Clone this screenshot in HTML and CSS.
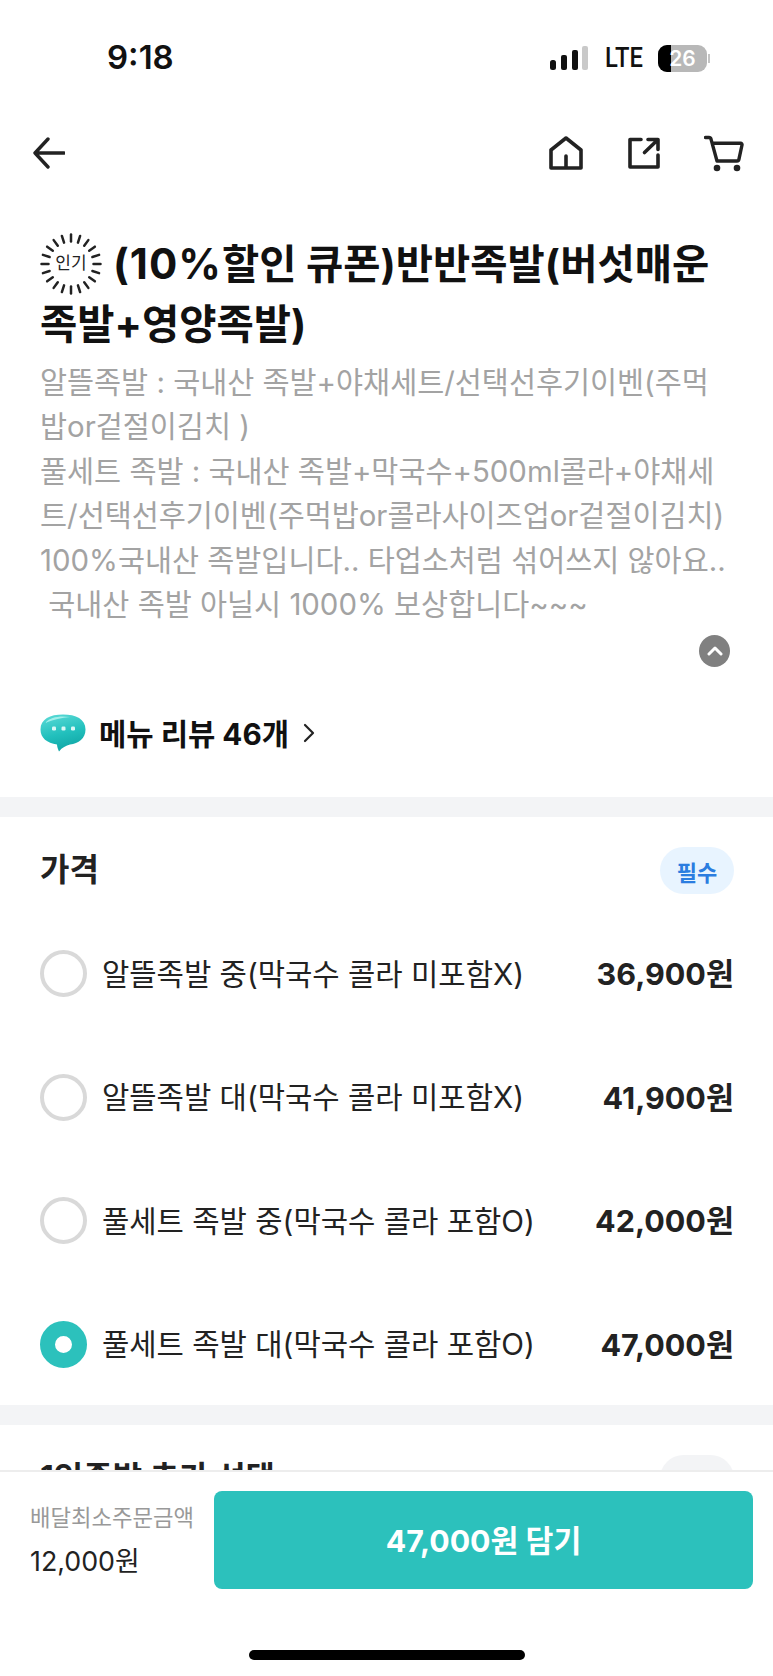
FILE: index.html
```html
<!DOCTYPE html>
<html lang="ko">
<head>
<meta charset="utf-8">
<title>반반족발</title>
<link rel="stylesheet" href="styles.css">
</head>
<body>
<div class="screen">
  <div class="status">
    <span class="time">9:18</span>
    <div class="status-right">
      <svg class="signal" viewBox="0 0 38 24" width="38" height="24"><rect x="0" y="14" width="6" height="10" rx="2.500" fill="#111"/><rect x="11" y="9" width="6" height="15" rx="2" fill="#111"/><rect x="22" y="4" width="6" height="20" rx="2" fill="#111"/><rect x="32" y="0" width="6" height="24" rx="2" fill="#c9c9c9"/></svg>
      <span class="lte">LTE</span>
      <div class="battery"><div class="battery-fill"></div><span class="battery-num">26</span></div>
      <div class="battery-cap"></div>
    </div>
  </div>
  <div class="nav">
    <svg class="ic-back" viewBox="0 0 32 32" width="32" height="32"><path d="M15 2 2 16l13 14M2 16h29" fill="none" stroke="#222" stroke-width="3.400" stroke-linecap="round" stroke-linejoin="round"/></svg>
    <div class="nav-right">
      <svg class="ic-home" viewBox="0 0 34 34" width="34" height="34"><path d="M2 32V14L17 2l15 12v18ZM17 32V20" fill="none" stroke="#222" stroke-width="3.600" stroke-linejoin="round" stroke-linecap="round"/></svg>
      <svg class="ic-share" viewBox="0 0 32 32" width="32" height="32"><path d="M13 2.500H2V30h28V18" fill="none" stroke="#222" stroke-width="3.600" stroke-linejoin="round" stroke-linecap="round"/><path d="M20 2.500h10v10M29 3.500 16.500 15.500" fill="none" stroke="#222" stroke-width="3.600" stroke-linecap="round" stroke-linejoin="round"/></svg>
      <svg class="ic-cart" viewBox="0 0 40 37" width="40" height="37"><path d="M1.500 2.500H5c1 0 1.700.6 2 1.600L13 26H33c1 0 1.700-.6 1.900-1.600L38 10c.2-1-.4-1.800-1.400-1.800H8.500" fill="none" stroke="#222" stroke-width="3.400" stroke-linecap="round" stroke-linejoin="round"/><circle cx="13" cy="33" r="3.300" fill="#222"/><circle cx="33" cy="33" r="3.300" fill="#222"/></svg>
    </div>
  </div>
  <section class="info">
    <h1 class="title">
      <span class="hot"><svg viewBox="0 0 62 62" width="62" height="62"><g stroke="#222" stroke-width="2.500" stroke-linecap="round"><path d="M31 1.500v7"/><path d="M31 1.500v7" transform="rotate(18 31 31)"/><path d="M31 1.500v7" transform="rotate(36 31 31)"/><path d="M31 1.500v7" transform="rotate(54 31 31)"/><path d="M31 1.500v7" transform="rotate(72 31 31)"/><path d="M31 1.500v7" transform="rotate(90 31 31)"/><path d="M31 1.500v7" transform="rotate(108 31 31)"/><path d="M31 1.500v7" transform="rotate(126 31 31)"/><path d="M31 1.500v7" transform="rotate(144 31 31)"/><path d="M31 1.500v7" transform="rotate(162 31 31)"/><path d="M31 1.500v7" transform="rotate(180 31 31)"/><path d="M31 1.500v7" transform="rotate(198 31 31)"/><path d="M31 1.500v7" transform="rotate(216 31 31)"/><path d="M31 1.500v7" transform="rotate(234 31 31)"/><path d="M31 1.500v7" transform="rotate(252 31 31)"/><path d="M31 1.500v7" transform="rotate(270 31 31)"/><path d="M31 1.500v7" transform="rotate(288 31 31)"/><path d="M31 1.500v7" transform="rotate(306 31 31)"/><path d="M31 1.500v7" transform="rotate(324 31 31)"/><path d="M31 1.500v7" transform="rotate(342 31 31)"/></g></svg><span class="hot-text">인기</span></span><span class="title-num">(10%</span>할인 큐폰)반반족발(버섯매운<br>족발+영양족발)
    </h1>
    <p class="desc">알뜰족발 : 국내산 족발+야채세트/선택선후기이벤(주먹<br>밥or겉절이김치 )<br>풀세트 족발 : 국내산 족발+막국수+500ml콜라+야채세<br>트/선택선후기이벤(주먹밥or콜라사이즈업or겉절이김치)<br>100%국내산 족발입니다.. 타업소처럼 섞어쓰지 않아요..<br>&nbsp;국내산 족발 아닐시 1000% 보상합니다~~~</p>
    <div class="more-row">
      <span class="more"><svg viewBox="0 0 16 10" width="16" height="10"><path d="M2 8l6-6 6 6" fill="none" stroke="#fff" stroke-width="3" stroke-linecap="round" stroke-linejoin="round"/></svg></span>
    </div>
    <div class="review">
      <svg class="bubble" viewBox="0 0 46 38" width="46" height="38"><defs><linearGradient id="bub" x1="0" y1="0" x2="0.3" y2="1"><stop offset="0" stop-color="#5fdcd8"/><stop offset="0.6" stop-color="#22c0bd"/><stop offset="1" stop-color="#12a9a8"/></linearGradient></defs><path d="M23 .5C36 .5 45.500 5 45.500 15.500c0 9-7 14-15.500 15-4 1-8 3-11 7-1-2-2-5-2-7C7 29 .5 24 .5 15.500.5 5 10 .5 23 .5Z" fill="url(#bub)"/><path d="M5 9C10 3 20 1.500 30 3 22 4 13 5.500 5 9Z" fill="#a2efea"/><rect x="12" y="12.500" width="4" height="4" rx="1.200" fill="#d9f7f5"/><rect x="21.500" y="12.500" width="4" height="4" rx="1.200" fill="#d9f7f5"/><rect x="31" y="12.500" width="4" height="4" rx="1.200" fill="#d9f7f5"/></svg>
      <span class="review-text">메뉴 리뷰 46개</span>
      <svg viewBox="0 0 12 20" width="12" height="20"><path d="M2 2l8 8-8 8" fill="none" stroke="#222" stroke-width="2.200" stroke-linecap="round" stroke-linejoin="round"/></svg>
    </div>
  </section>
  <div class="band"></div>
  <section class="options">
    <div class="opt-head"><h2 class="opt-title">가격</h2><span class="pill">필수</span></div>
    <div class="opt"><span class="radio"></span><span class="opt-label">알뜰족발 중(막국수 콜라 미포함X)</span><span class="opt-price">36,900원</span></div>
    <div class="opt"><span class="radio"></span><span class="opt-label">알뜰족발 대(막국수 콜라 미포함X)</span><span class="opt-price">41,900원</span></div>
    <div class="opt"><span class="radio"></span><span class="opt-label">풀세트 족발 중(막국수 콜라 포함O)</span><span class="opt-price">42,000원</span></div>
    <div class="opt"><span class="radio radio-on"></span><span class="opt-label">풀세트 족발 대(막국수 콜라 포함O)</span><span class="opt-price">47,000원</span></div>
  </section>
  <div class="band"></div>
  <section class="options next">
    <div class="opt-head"><h2 class="opt-title next-title">1인족발 추가 선택</h2><span class="pill pill-grey">선택</span></div>
  </section>
  <div class="bottom">
    <div class="bar">
      <div class="min"><span class="min-label">배달최소주문금액</span><span class="min-price">12,000원</span></div>
      <div class="cta">47,000원 담기</div>
    </div>
    <div class="home-ind"></div>
  </div>
</div>
</body>
</html>
```
FILE: styles.css
```css
* { box-sizing: border-box; }
html, body { margin: 0; padding: 0; background: #fff; }
body { font-family: "Inter", "Noto Sans CJK KR", sans-serif; color: #222; }
.screen { position: relative; width: 773px; height: 1676px; overflow: hidden; background: #fff; }
.status { display: flex; justify-content: space-between; align-items: center; height: 116px; padding: 0 63px 0 107px; }
.time { font-size: 33px; font-weight: 600; color: #111; line-height: 1; padding-bottom: 2px; }
.status-right { display: flex; align-items: center; }
.signal { margin-right: 17px; }
.lte { font-family: "Roboto", sans-serif; font-size: 27px; font-weight: 500; color: #111; margin-right: 15px; transform: scaleX(.88); transform-origin: left; width: 38px; }
.battery { position: relative; width: 49px; height: 27px; border-radius: 9px; background: #b8b8b8; overflow: hidden; display: flex; align-items: center; justify-content: center; }
.battery-fill { position: absolute; left: 0; top: 0; bottom: 0; width: 13px; background: #000; }
.battery-num { position: relative; color: #fff; font-size: 21px; font-weight: 600; }
.battery-cap { width: 2px; height: 9px; background: #c4c4c4; margin-left: 1px; }
.nav { display: flex; justify-content: space-between; align-items: center; height: 74px; padding: 0 29px 0 33px; }
.nav-right { display: flex; align-items: center; gap: 44px; }
.ic-share { margin-left: 1px; }
.info { padding: 45px 40px 0; height: 607px; }
.title { margin: 0; font-size: 40.500px; font-weight: 700; line-height: 59px; color: #111; white-space: nowrap; }
.title-num { font-size: 42px; letter-spacing: 1px; line-height: 1; }
.hot { position: relative; display: inline-flex; vertical-align: middle; width: 62px; height: 62px; margin-right: 11px; align-items: center; justify-content: center; margin-top: -8px; }
.hot svg { position: absolute; inset: 0; }
.hot-text { position: relative; font-size: 17px; font-weight: 400; line-height: 1; color: #222; }
.desc { margin: 7px 0 0; font-size: 29.400px; line-height: 44.400px; color: #a3a3a3; white-space: nowrap; }
.more-row { display: flex; justify-content: flex-end; margin: 8px 3px 0 0; }
.more { display: flex; align-items: center; justify-content: center; width: 31px; height: 32px; border-radius: 50%; background: #808080; }
.review { display: flex; align-items: center; margin-top: 44px; }
.bubble { margin-right: 13px; }
.review-text { font-size: 29.700px; font-weight: 700; color: #111; margin-right: 14px; }
.band { height: 20px; background: #f3f4f6; }
.options { padding: 30px 39px 0 40px; height: 588px; }
.opt-head { display: flex; justify-content: space-between; align-items: center; height: 47px; margin-bottom: 18px; }
.opt-title { margin: 0; padding-bottom: 8px; font-size: 32px; font-weight: 700; color: #222; }
.pill { display: flex; align-items: center; justify-content: center; width: 74px; height: 47px; border-radius: 24px; background: #e8f4ff; color: #2b7de0; font-size: 22px; font-weight: 700; }
.pill-grey { background: #f3f4f6; color: #777; }
.opt { display: flex; align-items: center; height: 123.500px; }
.radio { flex: none; width: 47px; height: 47px; border-radius: 50%; border: 4px solid #d9d9d9; background: #fff; margin-right: 15px; }
.radio-on { border: 15px solid #2cc1bc; }
.opt-label { flex: 1; padding-bottom: 3px; font-size: 29.700px; color: #222; white-space: nowrap; }
.opt-price { padding-bottom: 3px; font-size: 30.500px; font-weight: 700; color: #222; white-space: nowrap; }
.next { height: auto; }
.bottom { position: absolute; left: 0; right: 0; top: 1470px; bottom: 0; background: #fff; border-top: 2px solid #ededed; }
.bar { display: flex; align-items: center; justify-content: space-between; padding: 19px 20px 0 30px; }
.min { display: flex; flex-direction: column; gap: 10px; }
.min-label { font-size: 22.300px; color: #999; line-height: 32px; }
.min-price { font-size: 26.800px; color: #222; line-height: 34px; }
.cta { display: flex; align-items: center; justify-content: center; width: 539px; height: 98px; padding-bottom: 2px; border-radius: 8px; background: #2cc1bc; color: #fff; font-size: 30.300px; font-weight: 700; }
.home-ind { position: absolute; left: 249px; top: 178px; width: 276px; height: 10px; border-radius: 5px; background: #000; }
```
